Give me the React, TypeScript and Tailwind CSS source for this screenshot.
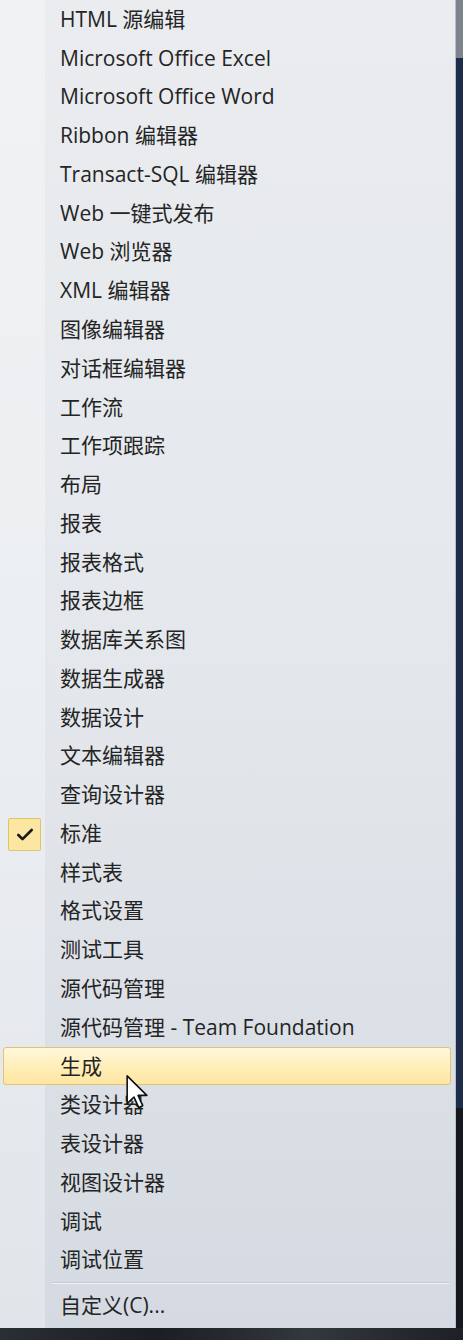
import { Check } from "lucide-react";

type Item = { label: string; checked?: boolean; active?: boolean };

const items: Item[] = [
  { label: "HTML 源编辑" },
  { label: "Microsoft Office Excel" },
  { label: "Microsoft Office Word" },
  { label: "Ribbon 编辑器" },
  { label: "Transact-SQL 编辑器" },
  { label: "Web 一键式发布" },
  { label: "Web 浏览器" },
  { label: "XML 编辑器" },
  { label: "图像编辑器" },
  { label: "对话框编辑器" },
  { label: "工作流" },
  { label: "工作项跟踪" },
  { label: "布局" },
  { label: "报表" },
  { label: "报表格式" },
  { label: "报表边框" },
  { label: "数据库关系图" },
  { label: "数据生成器" },
  { label: "数据设计" },
  { label: "文本编辑器" },
  { label: "查询设计器" },
  { label: "标准", checked: true },
  { label: "样式表" },
  { label: "格式设置" },
  { label: "测试工具" },
  { label: "源代码管理" },
  { label: "源代码管理 - Team Foundation" },
  { label: "生成", active: true },
  { label: "类设计器" },
  { label: "表设计器" },
  { label: "视图设计器" },
  { label: "调试" },
  { label: "调试位置" },
];

const MenuRow = ({ item }: { item: Item }) => (
  <div
    className={`relative flex items-center h-[38.78px] ${
      item.active
        ? "mx-[3px] mr-[4px] rounded-[3px] border border-[#e2c46e] bg-[linear-gradient(to_bottom,#fff8dc,#ffeeb8_55%,#ffe6a0)]"
        : ""
    }`}
  >
    {item.checked && (
      <div className="absolute left-[8px] top-[4px] w-[33px] h-[33px] rounded-[2px] border border-[#e3c36a] bg-[#fbe7a2] flex items-center justify-center">
        <Check size={20} strokeWidth={3.2} className="text-[#1b1b1b]" />
      </div>
    )}
    <span className={`${item.active ? "pl-[56px]" : "pl-[60px]"} text-[21px] leading-none text-[#242424] whitespace-nowrap`}>
      {item.label}
    </span>
  </div>
);

// mouse pointer drawn over the hovered item
const Cursor = () => (
  <svg
    className="absolute left-[126px] top-[1075px]"
    width="22"
    height="34"
    viewBox="0 0 12 19"
  >
    <path
      d="M0.5 0.5 L0.5 16 L4.3 12.3 L7 18.2 L9.2 17.2 L6.6 11.4 L11.5 11.4 Z"
      fill="#ffffff"
      stroke="#111111"
      strokeWidth="0.9"
      strokeLinejoin="round"
    />
  </svg>
);

export default function App() {
  return (
    <div
      className="relative w-[463px] h-[1340px] flex flex-col bg-[#1c2230] overflow-hidden"
      style={{ fontFamily: '"Open Sans", "Noto Sans CJK SC", sans-serif' }}
    >
      <div className="flex h-[1328px]">
        {/* Menu */}
        <div className="w-[456px] h-full border-r border-[#b9bfc8] bg-[linear-gradient(to_right,rgba(255,255,255,0.3)_45px,transparent_45px),linear-gradient(to_bottom,#eaecef,#e4e8ec_50%,#d5dae2)] flex flex-col">
          {items.map((item) => (
            <MenuRow key={item.label} item={item} />
          ))}
          <div className="h-[7px] flex flex-col justify-center pl-[53px] pr-[6px]">
            <div className="h-px bg-[#c4c9d1]" />
            <div className="h-px bg-[#f2f4f7]" />
          </div>
          <div className="flex items-center h-[38px]">
            <span className="pl-[60px] text-[21px] leading-none text-[#242424] whitespace-nowrap">
              自定义(C)...
            </span>
          </div>
        </div>
        {/* Background behind the menu */}
        <div className="flex-1 flex flex-col">
          <div className="h-[58px] bg-[#7d838d]" />
          <div className="flex-1 bg-[#1d2c4b]" />
          <div className="h-[220px] bg-[#15181e]" />
        </div>
      </div>
      <div className="flex-1 bg-[linear-gradient(to_right,#2a2e35,#1b1e24,#33373e,#1d2026)]" />
      <Cursor />
    </div>
  );
}
